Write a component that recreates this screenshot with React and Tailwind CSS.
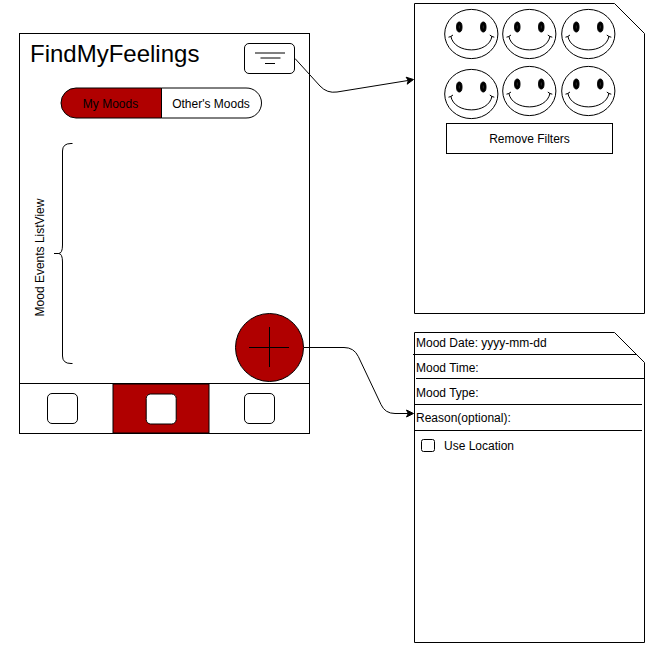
const RED = '#b00000';

function FilterButton() {
  return (
    <button className="flex h-[31px] w-[51px] shrink-0 items-start justify-center rounded-[5px] border border-black bg-white" aria-label="Filter">
      <svg className="mt-2 h-3 w-[30px]" viewBox="0 0 30 12" fill="none" stroke="black">
        <path d="M0 1H30M5.5 6H25.5M10 11.5H20" />
      </svg>
    </button>
  );
}

function MoodToggle() {
  return (
    <div className="relative ml-10 mt-3 flex h-8 w-[202px] items-center pt-0.5 text-xs">
      <svg className="absolute inset-0 h-8 w-[202px]" viewBox="0 0 202 32" stroke="black">
        <path d="M101.500 1H16A15 15 0 0 0 1 16A15 15 0 0 0 16 31H101.500Z" fill={RED} />
        <path d="M101.500 1H186A15 15 0 0 1 201.500 16A15 15 0 0 1 186 31H101.500Z" fill="white" />
      </svg>
      <span className="relative w-[101px] text-center">My Moods</span>
      <span className="relative w-[101px] pr-px text-center">Other's Moods</span>
    </div>
  );
}

function TabIcon() {
  return <span className="block h-[31px] w-[31px] rounded-[5px] border border-black bg-white" />;
}

function ActiveTab() {
  return (
    <svg className="-ml-px block h-[49px] w-[98px] max-w-none" viewBox="0 0 98 49" stroke="black">
      <rect x="1" y="0" width="96" height="49" fill={RED} />
      <rect x="34.200" y="10" width="30" height="30" rx="4.500" fill="white" />
    </svg>
  );
}

function Phone() {
  return (
    <section className="ml-[19px] mt-[33px] flex h-[401px] w-[291px] shrink-0 flex-col border border-black">
      <header className="flex h-[41px] items-start justify-between pl-[10px] pr-[14px]">
        <h1 className="mt-1 text-2xl leading-8">FindMyFeelings</h1>
        <div className="pt-[9px]">
          <FilterButton />
        </div>
      </header>
      <MoodToggle />
      <div className="flex flex-1 justify-between">
        <div className="flex pl-[14px] pt-6">
          <div className="flex h-[222px] w-3 items-center justify-center">
            <span className="-rotate-90 whitespace-nowrap pr-[7px] text-xs">Mood Events ListView</span>
          </div>
          <svg className="ml-2 h-[222px] w-[19px]" viewBox="0 0 19 222" fill="none" stroke="black">
            <path d="M18.500 .5H17Q8.500 .5 8.500 8V102Q8.500 110.500 4.500 110.500H0H4.500Q8.500 110.500 8.500 119V213Q8.500 220.500 17 220.500H18.500" />
          </svg>
        </div>
        <button className="mb-px mr-[5px] h-[70px] w-[70px] self-end" aria-label="Add">
          <svg className="h-[70px] w-[70px]" viewBox="0 0 70 70" stroke="black">
            <circle cx="35.500" cy="35.500" r="34" fill={RED} />
            <path d="M15 35.500H55M35.500 15V55" />
          </svg>
        </button>
      </div>
      <nav className="grid h-[50px] shrink-0 grid-cols-[93px_97px_99px] border-t border-black">
        <div className="pl-[27px] pt-[9px]"><TabIcon /></div>
        <ActiveTab />
        <div className="pl-[34px] pt-[9px]"><TabIcon /></div>
      </nav>
    </section>
  );
}

function CutCard({ children }) {
  return (
    <section className="relative h-[311px] w-[231px]">
      <svg className="absolute inset-0 h-[311px] w-[231px]" viewBox="0 0 231 311" fill="white" stroke="black">
        <path d="M.5 .5H200.500L230.500 30.500V310.500H.5Z" />
      </svg>
      <div className="relative">{children}</div>
    </section>
  );
}

function Smiley({ className = '' }) {
  return (
    <svg className={'h-[52px] w-[55px] ' + className} viewBox="0 0 55 52" fill="none" stroke="black">
      <ellipse cx="27.300" cy="26" rx="26.600" ry="24.600" />
      <ellipse cx="15.300" cy="19" rx="2.700" ry="5" fill="black" />
      <ellipse cx="39.300" cy="19" rx="2.700" ry="5" fill="black" />
      <path d="M6.800 28C10 46.500 45 46.500 48 28M4.500 29.200Q6.500 29 9 27M45.800 27Q48 29 50.300 29.200" />
      <path d="M15.300 17.500V20.500M39.300 17.500V20.500" stroke="#444" strokeWidth=".7" />
    </svg>
  );
}

function FiltersCard() {
  return (
    <CutCard>
      <div className="flex gap-[3.5px] pl-[29.500px] pt-[5px]">
        <Smiley />
        <Smiley className="-mt-[0.5px]" />
        <Smiley className="-mt-[0.5px]" />
      </div>
      <div className="flex gap-[3.5px] pl-[29.500px] pt-[5px]">
        <Smiley className="mt-[2.5px]" />
        <Smiley />
        <Smiley />
      </div>
      <button className="ml-8 mt-[3.5px] block h-[31px] w-[167px] border border-black bg-white text-xs">Remove Filters</button>
    </CutCard>
  );
}

function MoodFormCard() {
  return (
    <CutCard>
      <div className="pt-px text-xs">
        <div className="-ml-px h-[22px] w-[223px] border-b border-black pl-[3px] leading-5">Mood Date: yyyy-mm-dd</div>
        <div className="ml-0.5 h-6 w-[228px] border-b border-black leading-[26px]">Mood Time:</div>
        <div className="h-[26px] w-[228px] border-b border-black pl-0.5 leading-7">Mood Type:</div>
        <div className="h-[26px] w-[228px] border-b border-black pl-0.5 leading-[26px]">Reason(optional):</div>
        <label className="flex items-start gap-[9px] pl-[7px] pt-2">
          <span className="h-[13px] w-[14px] rounded-[2.5px] border border-black" />
          <span className="leading-[14px]">Use Location</span>
        </label>
      </div>
    </CutCard>
  );
}

function Connectors() {
  return (
    <svg className="pointer-events-none absolute inset-0 h-[648px] w-[666px]" viewBox="0 0 666 648" fill="none" stroke="black">
      <path d="M295 58.500L320 86Q327 93.500 337 92L408 80.500" />
      <path d="M413.500 79.500L407.200 84.200L408.300 80.400L406.100 77.200Z" fill="black" />
      <path d="M304 347.500H344Q354 347.500 358.300 356.500L381 404.500Q385 413.500 395 413.500H408" />
      <path d="M413.500 413.500L406.500 417L408.300 413.500L406.500 410Z" fill="black" />
    </svg>
  );
}

export default function App() {
  return (
    <main className="relative flex h-[648px] w-[666px] overflow-hidden bg-white font-['Liberation_Sans',Arial,sans-serif] text-black">
      <Phone />
      <div className="ml-[104px] mt-[3px] flex flex-col gap-[18px]">
        <FiltersCard />
        <MoodFormCard />
      </div>
      <Connectors />
    </main>
  );
}
